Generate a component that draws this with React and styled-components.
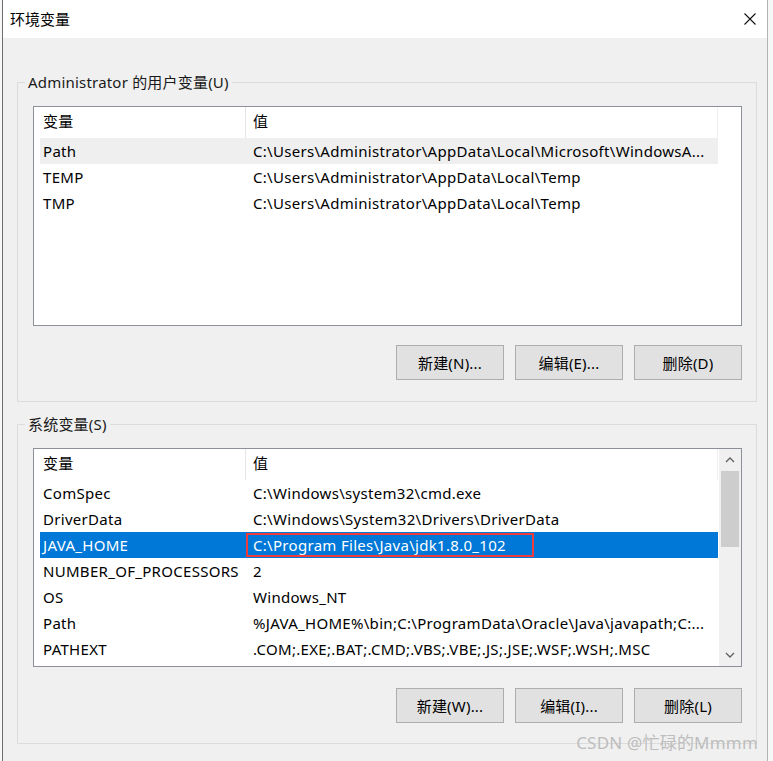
import styled, { createGlobalStyle } from "styled-components";

const GlobalStyle = createGlobalStyle`
    html, body {
        margin: 0;
        padding: 0;
        background: #f7f7f7;
    }
    body {
        font-family: "Noto Sans", "Noto Sans CJK SC", sans-serif;
        font-size: 15px;
        color: #000;
    }
`

const Screen = styled.div`
    width: 773px;
    height: 761px;
    overflow: hidden;
    position: relative;
    background: #f7f7f7;
`

const Window = styled.div`
    box-sizing: border-box;
    margin-left: 2px;
    width: 766px;
    height: 761px;
    border-left: 1px solid #6e6e6e;
    border-right: 1px solid #b4b4b4;
    background: #f0f0f0;
    display: flex;
    flex-direction: column;
`

const TitleBar = styled.div`
    height: 38px;
    flex: none;
    background: #fff;
    display: flex;
    align-items: center;
    justify-content: space-between;
    padding: 0 10px 0 7px;
`

const TitleText = styled.span`
    font-size: 15px;
    line-height: 20px;
`

const Body = styled.div`
    padding: 34px 10px 0 14px;
    display: flex;
    flex-direction: column;
    gap: 12px;
`

const Group = styled.fieldset`
    margin: 0;
    min-width: 0;
    border: 1px solid #dcdcdc;
    padding: 14px 14px ${p => p.$bottom}px 15px;
    display: flex;
    flex-direction: column;
    gap: ${p => p.$gap}px;
`

const Legend = styled.legend`
    margin-left: -8px;
    padding: 0 3px;
    font-size: 15px;
    line-height: 20px;
    letter-spacing: 0.2px;
    color: #1a1a1a;
`

const List = styled.div`
    box-sizing: border-box;
    height: ${p => p.$height}px;
    border: 1px solid #8c9099;
    background: #fff;
    display: flex;
    overflow: hidden;
`

const ListContent = styled.div`
    flex: 1;
    padding-left: 6px;
`

const Row = styled.div`
    box-sizing: border-box;
    width: 678px;
    height: ${p => (p.$header ? 31 : 26)}px;
    padding-bottom: ${p => (p.$header ? 3 : 1)}px;
    display: grid;
    grid-template-columns: 205px 1fr;
    align-items: center;
    line-height: 20px;
    letter-spacing: 0.3px;
    white-space: nowrap;
    background: ${p => (p.$selected ? "#0078d7" : p.$hover ? "#efefef" : "#fff")};
    color: ${p => (p.$selected ? "#fff" : "#000")};
`

const NameCell = styled.span`
    padding-left: 3px;
    overflow: hidden;
`

const ValueCell = styled.span`
    padding-left: 8px;
    overflow: hidden;
`

const HeaderValueCell = styled.span`
    align-self: stretch;
    display: flex;
    align-items: center;
    padding-left: 7px;
    margin-bottom: -3px;
    padding-bottom: 3px;
    border-left: 1px solid #e5e5e5;
    border-right: 1px solid #efefef;
`

const Marked = styled.span`
    display: inline-block;
    box-sizing: border-box;
    margin-left: -7px;
    width: 288px;
    height: 24px;
    padding-left: 5px;
    line-height: 20px;
    border: 2px solid #ee3b3b;
`

const ScrollBar = styled.div`
    width: 22px;
    flex: none;
    background: #f0f0f0;
    display: flex;
    flex-direction: column;
    align-items: center;
`

const ScrollArrow = styled.div`
    height: 22px;
    width: 100%;
    display: flex;
    align-items: center;
    justify-content: center;
    flex: none;
`

const ScrollTrack = styled.div`
    flex: 1;
    width: 100%;
    padding: 0 2px;
    box-sizing: border-box;
`

const ScrollThumb = styled.div`
    height: 76px;
    background: #cdcdcd;
`

const ButtonRow = styled.div`
    display: flex;
    justify-content: flex-end;
    gap: 11px;
`

const Button = styled.button`
    box-sizing: border-box;
    width: 108px;
    height: 35px;
    border: 1px solid #adadad;
    background: #e1e1e1;
    font-family: inherit;
    font-size: 15px;
    letter-spacing: 0.2px;
    color: #000;
    padding: 0;
`

const Watermark = styled.div`
    position: absolute;
    right: 15px;
    bottom: 7px;
    font-size: 17px;
    line-height: 22px;
    color: #bdbdbd;
    letter-spacing: 0.2px;
`

const userVars = [
    ["Path", "C:\\Users\\Administrator\\AppData\\Local\\Microsoft\\WindowsA...", true],
    ["TEMP", "C:\\Users\\Administrator\\AppData\\Local\\Temp"],
    ["TMP", "C:\\Users\\Administrator\\AppData\\Local\\Temp"],
];

const systemVars = [
    ["ComSpec", "C:\\Windows\\system32\\cmd.exe"],
    ["DriverData", "C:\\Windows\\System32\\Drivers\\DriverData"],
    ["JAVA_HOME", "C:\\Program Files\\Java\\jdk1.8.0_102"],
    ["NUMBER_OF_PROCESSORS", "2"],
    ["OS", "Windows_NT"],
    ["Path", "%JAVA_HOME%\\bin;C:\\ProgramData\\Oracle\\Java\\javapath;C:..."],
    ["PATHEXT", ".COM;.EXE;.BAT;.CMD;.VBS;.VBE;.JS;.JSE;.WSF;.WSH;.MSC"],
];

function CloseIcon() {
    return (
        <svg width="14" height="14" viewBox="0 0 14 14">
            <path d="M1.5 1.5 L12.5 12.5 M12.5 1.5 L1.5 12.5" stroke="#111" strokeWidth="1.1" fill="none" />
        </svg>
    );
}

function Chevron({ up }) {
    return (
        <svg width="10" height="6" viewBox="0 0 10 6">
            <path d={up ? "M1 5 L5 1 L9 5" : "M1 1 L5 5 L9 1"} stroke="#606060" strokeWidth="1.3" fill="none" />
        </svg>
    );
}

function HeaderRow() {
    return (
        <Row $header>
            <NameCell>变量</NameCell>
            <HeaderValueCell>值</HeaderValueCell>
        </Row>
    );
}

export default function App() {
    return (
        <Screen>
            <GlobalStyle />
            <Window>
                <TitleBar>
                    <TitleText>环境变量</TitleText>
                    <CloseIcon />
                </TitleBar>
                <Body>
                    <Group $bottom={21} $gap={19}>
                        <Legend>Administrator 的用户变量(U)</Legend>
                        <List $height={220}>
                            <ListContent>
                                <HeaderRow />
                                {userVars.map(([name, value, hover]) => (
                                    <Row key={name} $hover={hover}>
                                        <NameCell>{name}</NameCell>
                                        <ValueCell>{value}</ValueCell>
                                    </Row>
                                ))}
                            </ListContent>
                        </List>
                        <ButtonRow>
                            <Button>新建(N)...</Button>
                            <Button>编辑(E)...</Button>
                            <Button>删除(D)</Button>
                        </ButtonRow>
                    </Group>
                    <Group $bottom={20} $gap={21}>
                        <Legend>系统变量(S)</Legend>
                        <List $height={219}>
                            <ListContent>
                                <HeaderRow />
                                {systemVars.map(([name, value]) => {
                                    const selected = name === "JAVA_HOME";
                                    return (
                                        <Row key={name} $selected={selected}>
                                            <NameCell>{name}</NameCell>
                                            <ValueCell>
                                                {selected ? <Marked>{value}</Marked> : value}
                                            </ValueCell>
                                        </Row>
                                    );
                                })}
                            </ListContent>
                            <ScrollBar>
                                <ScrollArrow><Chevron up /></ScrollArrow>
                                <ScrollTrack>
                                    <ScrollThumb />
                                </ScrollTrack>
                                <ScrollArrow><Chevron /></ScrollArrow>
                            </ScrollBar>
                        </List>
                        <ButtonRow>
                            <Button>新建(W)...</Button>
                            <Button>编辑(I)...</Button>
                            <Button>删除(L)</Button>
                        </ButtonRow>
                    </Group>
                </Body>
            </Window>
            <Watermark>CSDN @忙碌的Mmmm</Watermark>
        </Screen>
    );
}
